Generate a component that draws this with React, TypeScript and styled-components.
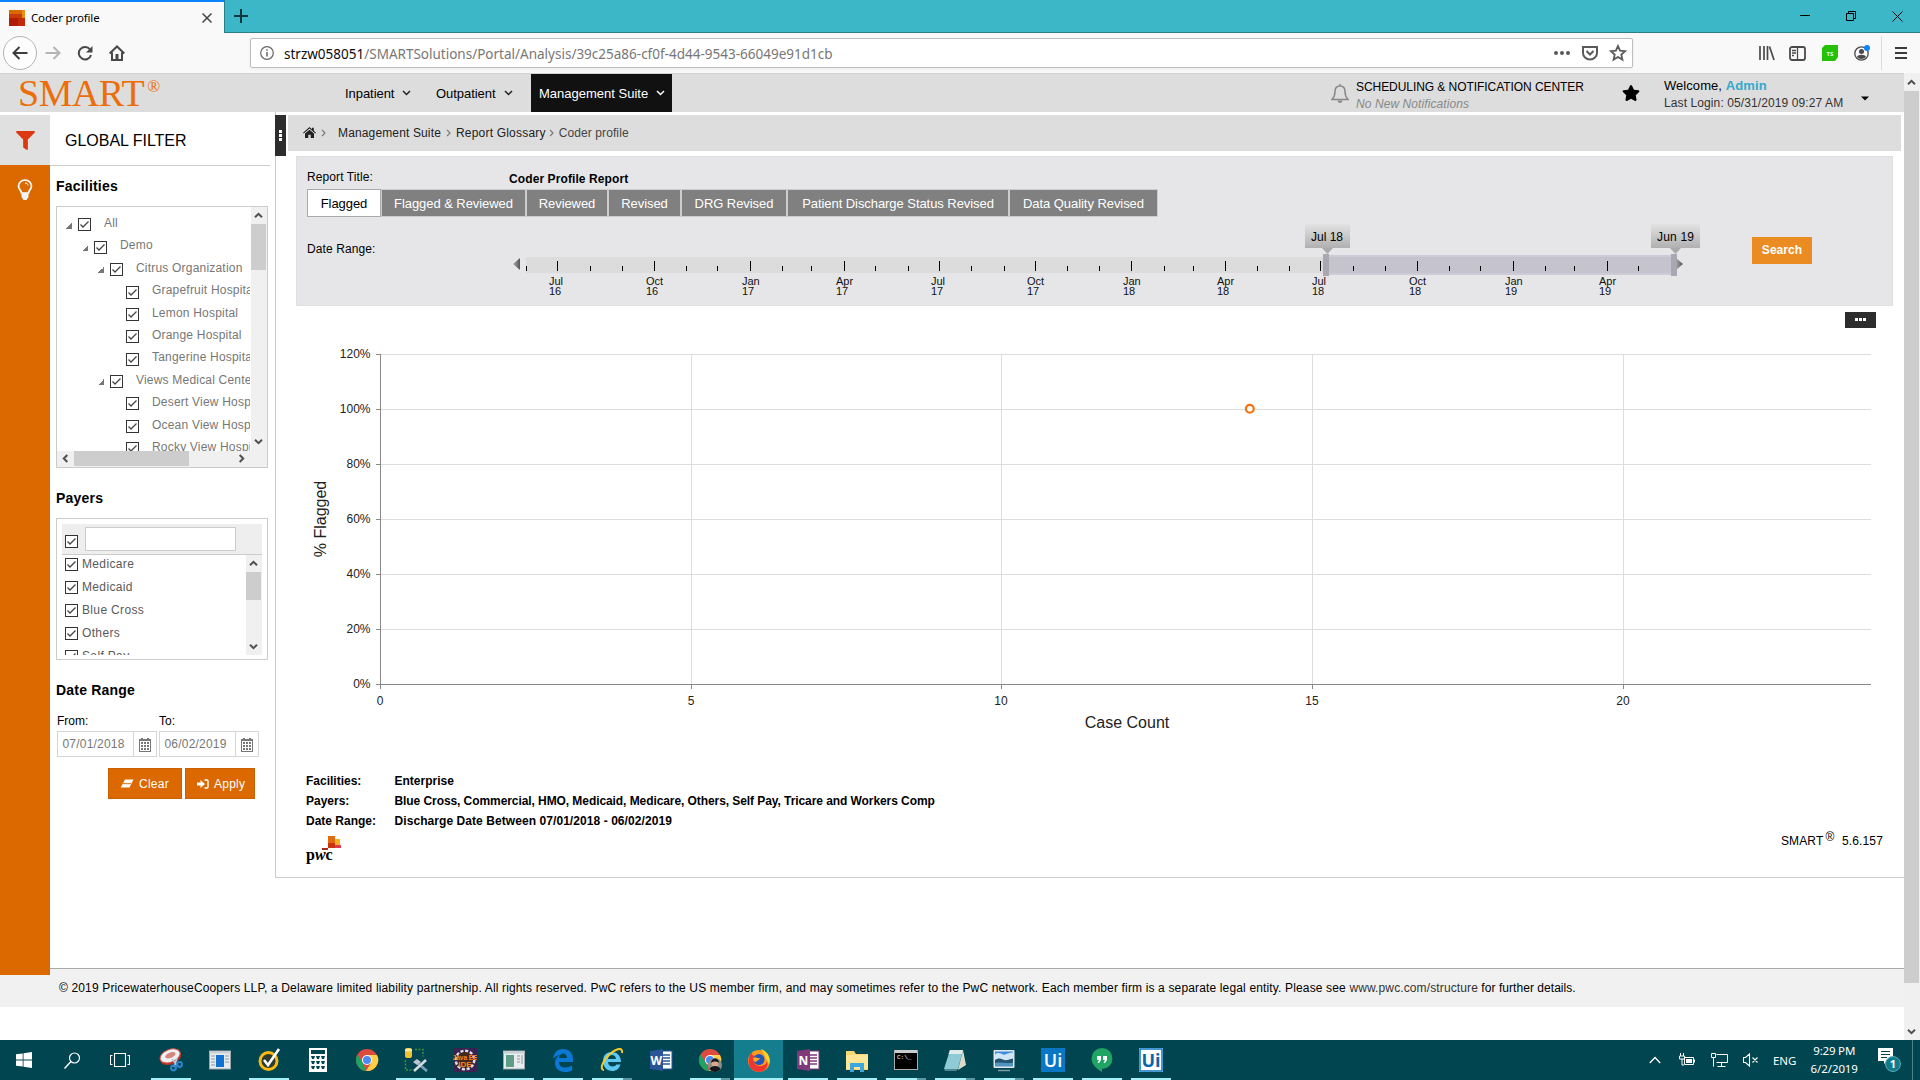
import React from 'react';
import styled, { createGlobalStyle } from 'styled-components';
import { FaFilter, FaStar } from 'react-icons/fa';

const Global = createGlobalStyle`
  html, body { margin: 0; padding: 0; background: #fff; overflow: hidden; }
  * { box-sizing: border-box; }
  body { font-family: "Liberation Sans", Arial, sans-serif; font-size: 12px; color: #000; }
  svg { display: block; flex: none; }
`;

const chromeFont = '"Noto Sans", "Segoe UI", sans-serif';

const T = styled.span<{ $s?: number; $c?: string; $b?: boolean; $ls?: number; $i?: boolean }>`
  font-size: ${p => p.$s ?? 12}px;
  color: ${p => p.$c ?? 'inherit'};
  font-weight: ${p => (p.$b ? 700 : 400)};
  font-style: ${p => (p.$i ? 'italic' : 'normal')};
  letter-spacing: ${p => p.$ls ?? 0}px;
  white-space: pre;
`;
const Gap = styled.span<{ $w: number }>`width: ${p => p.$w}px; flex: none;`;
const Spring = styled.span`flex: 1;`;

const Screen = styled.div`
  width: 1920px; height: 1080px; display: flex; flex-direction: column; overflow: hidden;
`;

/* ---------- browser chrome ---------- */
const TabStrip = styled.div`
  height: 33px; flex: none; display: flex; background: #3cb7c8;
`;
const BrowserTab = styled.div`
  width: 224px; height: 33px; display: flex; align-items: center; padding-left: 9px;
  background: #f9f9fa; border-top: 2px solid #0a84ff; font-family: ${chromeFont};
`;
const StripRest = styled.div`
  flex: 1; display: flex; align-items: center; border-left: 1px solid #2b7f8b; border-bottom: 1px solid #2b7f8b;
  padding-left: 9px;
`;
const Toolbar = styled.div`
  height: 40px; flex: none; display: flex; align-items: center; background: #f9f9fa; padding-left: 3px;
`;
const BackButton = styled.div`
  width: 34px; height: 34px; border-radius: 50%; border: 1px solid #b4b4b5; background: #fdfdfd;
  display: flex; align-items: center; justify-content: center;
`;
const UrlBox = styled.div`
  width: 1383px; height: 30px; border: 1px solid #bebebe; border-radius: 2px; background: #fff;
  display: flex; align-items: center; padding: 0 2px 0 9px; box-shadow: 0 1px 3px rgba(0,0,0,.06);
  font-family: ${chromeFont};
`;
const UrlText = styled.span`padding-top: 2px; font-size: 13.5px; color: #777; white-space: pre;`;
const UrlHost = styled.span`color: #0c0c0d;`;
const ToolDivider = styled.div`width: 1px; height: 34px; background: #dcdcdc; margin: 0 12px 0 11px;`;

/* ---------- page ---------- */
const PageRow = styled.div`height: 967px; flex: none; display: flex;`;
const Page = styled.div`width: 1904px; display: flex; flex-direction: column; background: #fff;`;
const Header = styled.header`
  height: 39px; flex: none; background: #ddd; display: flex; align-items: center; border-top: 1px solid #d2d2d2;
`;
const Logo = styled.div`
  width: 336px; padding-left: 18px; display: flex; align-items: flex-start; color: #eb6e08; height: 38px;
  font-family: "Liberation Serif", "Times New Roman", serif;
`;
const LogoWord = styled.span`font-size: 38px; line-height: 39px; letter-spacing: -.5px;`;
const LogoMark = styled.span`font-size: 17px; line-height: 25px; margin-left: 3px;`;
const NavItem = styled.div<{ $active?: boolean; $w: number }>`
  width: ${p => p.$w}px; height: 38px; display: flex; align-items: center; padding-left: ${p => (p.$active ? 8 : 9)}px;
  background: ${p => (p.$active ? '#111' : 'transparent')}; color: ${p => (p.$active ? '#fff' : '#000')};
`;
const Stack = styled.div<{ $w: number; $drop: number }>`
  width: ${p => p.$w}px; display: flex; flex-direction: column; line-height: 17px; padding-top: ${p => p.$drop}px;
`;

const Body = styled.div`height: 856px; flex: none; display: flex;`;
const Rail = styled.div`
  position: relative; width: 50px; height: 860px; margin-top: 3px; background: #dc6900; flex: none;
`;
const RailCell = styled.div<{ $on?: boolean }>`
  height: 50px; display: flex; align-items: center; justify-content: center;
  background: ${p => (p.$on ? '#e0e0e0' : 'transparent')};
`;
const Filter = styled.aside`width: 225px; padding: 3px 5px 0 0; display: flex; flex-direction: column;`;
const FilterTitle = styled.div`
  height: 51px; border-bottom: 1px solid #ccc; padding-left: 15px; line-height: 51px; flex: none;
`;
const FilterHeading = styled.div<{ $h: number; $lh: number }>`
  height: ${p => p.$h}px; line-height: ${p => p.$lh}px; padding-left: 6px; font-size: 14px; font-weight: 700;
  letter-spacing: .2px; flex: none;
`;
const TreeBox = styled.div`
  margin-left: 6px; width: 212px; height: 262px; border: 1px solid #ccc; display: flex; flex: none;
`;
const TreeLeft = styled.div`width: 194px; display: flex; flex-direction: column;`;
const TreeRows = styled.div`width: 193px; height: 244px; overflow: hidden; padding-top: 5.4px;`;
const TreeRow = styled.div<{ $d: number }>`
  height: 22.4px; display: flex; align-items: center; padding-left: ${p => 9 + p.$d * 16}px; color: #777; white-space: nowrap;
`;
const TreeMark = styled.span<{ $open?: boolean }>`
  width: 6px; height: 6px; margin: 4px 6px 0 0; flex: none;
  background: ${p => (p.$open ? 'linear-gradient(135deg, transparent 50%, #777 50%)' : 'none')};
`;
const TreeText = styled.span`margin: -1px 0 0 13px; letter-spacing: .2px;`;
const CheckFrame = styled.span<{ $mt?: number }>`
  width: 13px; height: 13px; border: 1px solid #333; background: #fff; flex: none; margin-top: ${p => p.$mt ?? 0}px;
`;
const VBar = styled.div<{ $w: number; $pad: number }>`
  width: ${p => p.$w}px; background: #f0f0f0; display: flex; flex-direction: column; align-items: flex-start;
  justify-content: space-between; padding-bottom: ${p => p.$pad}px;
`;
const VTop = styled.div`width: 100%; display: flex; flex-direction: column; align-items: flex-start;`;
const VThumb = styled.div<{ $h: number }>`width: 15px; height: ${p => p.$h}px; background: #cdcdcd;`;
const ArrowCell = styled.div<{ $w?: number; $h?: number }>`
  width: ${p => p.$w ?? 15}px; height: ${p => p.$h ?? 17}px; display: flex; align-items: center; justify-content: center;
`;
const HBar = styled.div`height: 16px; background: #f0f0f0; display: flex; align-items: flex-start;`;
const HThumb = styled.div`width: 115px; height: 15px; background: #cdcdcd; margin-right: 44px;`;

const PayerBox = styled.div`
  margin-left: 6px; width: 212px; height: 142px; border: 1px solid #ccc; padding: 5px 5px 0; flex: none;
`;
const PayerHead = styled.div`
  height: 31px; background: #eee; border-bottom: 1px solid #ccc; display: flex; align-items: flex-start; padding: 3px 0 0 3px;
`;
const SearchInput = styled.div`width: 151px; height: 24px; border: 1px solid #ccc; background: #fff; margin-left: 7px;`;
const PayerBody = styled.div`height: 100px; display: flex;`;
const PayerRows = styled.div`width: 184px; overflow: hidden; padding-top: 3px;`;
const PayerRow = styled.div`height: 23px; display: flex; align-items: flex-start; padding-left: 3px; color: #5a5a5a; line-height: 13px;`;

const DateLabels = styled.div`height: 20px; line-height: 20px; display: flex; padding-left: 7px;`;
const DateLabel = styled.span`width: 102px;`;
const DateRow = styled.div`display: flex; gap: 2px; padding-left: 7px;`;
const DateBox = styled.div`
  width: 100px; height: 26px; border: 1px solid #d6d6d6; display: flex; color: #777; line-height: 24px;
`;
const DateText = styled.span`width: 76px; padding-left: 4.5px; letter-spacing: .2px; border-right: 1px solid #d6d6d6;`;
const DateIcon = styled.span`flex: 1; display: flex; align-items: center; justify-content: center;`;
const FilterActions = styled.div`display: flex; gap: 3px; margin: 11px 0 0 58px;`;
const FilterButton = styled.div<{ $w: number }>`
  width: ${p => p.$w}px; height: 31px; background: #dc6900; border: 1px solid #c96100; color: #fff;
  display: flex; align-items: center; padding-left: 11px; gap: 5px; letter-spacing: .25px; font-size: 12px;
`;

const Content = styled.main`
  width: 1629px; height: 766px; border-left: 1px solid #ccc; border-bottom: 1px solid #ccc;
  display: flex; flex-direction: column;
`;
const CrumbRow = styled.div`display: flex; margin: 3px 0 0 -1px; height: 41px; flex: none;`;
const Handle = styled.div`
  width: 11px; height: 41px; background: #2d2d2d; display: flex; flex-direction: column; align-items: center;
  justify-content: center; gap: 1px;
`;
const Dot = styled.span`width: 3px; height: 3px; background: #fff;`;
const Crumbs = styled.nav`
  margin-left: 2px; width: 1613px; height: 36px; background: #ddd; display: flex; align-items: center; padding-left: 15px; color: #222;
`;
const ReportPanel = styled.section`
  margin-left: 20px; width: 1597px; height: 150px; background: #e6e6e8; border: 1px solid #dfdfe1; flex: none;
  padding-left: 10px; display: flex; flex-direction: column;
`;
const TitleRow = styled.div`height: 32px; padding-top: 12px; display: flex; line-height: 16px; letter-spacing: .1px;`;
const TitleLabel = styled.span`width: 202px;`;
const TitleValue = styled.span`padding-top: 2px; font-weight: 700;`;
const TabRow = styled.div`display: flex; height: 28px; flex: none;`;
const ReportTab = styled.div<{ $w: number; $on?: boolean }>`
  width: ${p => p.$w}px; height: 28px; border: 1px solid ${p => (p.$on ? '#aaa' : '#ccc')};
  background: ${p => (p.$on ? '#fff' : '#808080')}; color: ${p => (p.$on ? '#000' : '#fff')};
  font-size: 13px; letter-spacing: -.06px; display: flex; align-items: center; justify-content: center; white-space: nowrap;
`;
const SliderRow = styled.div`display: flex; height: 88px; align-items: flex-start;`;
const SliderLabel = styled.span`width: 200px; margin-top: 24px; line-height: 16px; letter-spacing: .1px;`;
const SearchButton = styled.div`
  width: 60px; height: 27px; margin: 20px 0 0 45px; background: #eb8c22; color: #fff; font-weight: 700; line-height: 26px;
  text-align: center; letter-spacing: .05px;
`;
const MoreRow = styled.div`height: 22px; padding: 6px 28px 0 0; display: flex; justify-content: flex-end; flex: none;`;
const MoreButton = styled.div`
  width: 31px; height: 16px; background: #2d2d2d; display: flex; gap: 1px; align-items: center; justify-content: center; padding-bottom: 1px;
`;
const ChartArea = styled.div`padding-left: 20px;`;
const Summary = styled.dl`
  margin: 0 0 0 30px; display: grid; grid-template-columns: 88.5px 1fr; grid-auto-rows: 20px; line-height: 20px; font-weight: 700;
`;
const Cell = styled.span<{ $ls?: number }>`letter-spacing: ${p => p.$ls ?? 0}px;`;
const BrandRow = styled.div`display: flex; justify-content: space-between; padding: 2px 21px 0 29px;`;
const PwcLogo = styled.div`width: 40px; padding-top: 2px; display: flex; flex-direction: column;`;
const PwcWord = styled.span`
  font: 700 16px/14px "Liberation Serif", serif; letter-spacing: 0; margin: -3px 0 0 1px;
`;
const Version = styled.div`display: flex; align-items: flex-start; letter-spacing: .15px; line-height: 16px; white-space: pre;`;
const Registered = styled.span`line-height: 9px; padding: 0 4px 0 2px;`;
const Footer = styled.footer`
  height: 39px; flex: none; background: #f1f1f1; border-top: 1px solid #aaa; padding-left: 59px; line-height: 38px;
`;
const PageScroll = styled.div`
  width: 16px; background: #f0f0f0; display: flex; flex-direction: column; justify-content: space-between;
`;

/* ---------- taskbar ---------- */
const Taskbar = styled.div`
  height: 40px; flex: none; background: #00454f; display: flex; color: #fff; font-family: ${chromeFont};
`;
const SysSlot = styled.div<{ $w: number; $r?: number }>`
  width: ${p => p.$w}px; padding-right: ${p => p.$r ?? 0}px; display: flex; align-items: center; justify-content: center;
`;
const AppSlot = styled.div<{ $on?: boolean }>`
  width: 49px; height: 40px; display: flex; flex-direction: column; align-items: center; justify-content: space-between;
  padding-top: 8px; background: ${p => (p.$on ? '#157e8e' : 'transparent')};
`;
const Underline = styled.div<{ $k: number; $on?: boolean }>`
  width: ${p => (p.$on ? 49 : 40)}px; height: 2px;
  background: ${p => (p.$k === 0 ? 'transparent' : p.$k === 2 ? 'linear-gradient(90deg,#a5eff8 31px,#5c98a1 31px)' : '#a5eff8')};
`;
const Tray = styled.div`flex: 1; display: flex; align-items: center; padding-left: 474px;`;
const Clock = styled.div`width: 64px; display: flex; flex-direction: column; align-items: center; line-height: 18px;`;

const Check = ({ mt }: { mt?: number }) => (
  <CheckFrame $mt={mt}>
    <svg width="11" height="11" viewBox="0 0 11 11"><path d="M1.5 5.5 4 8 9.5 2.5" fill="none" stroke="#444" strokeWidth="1.3" /></svg>
  </CheckFrame>
);
const Arrow = ({ dir }: { dir: 'u' | 'd' | 'l' | 'r' }) => {
  const rot = { u: 0, r: 90, d: 180, l: 270 }[dir];
  return (
    <svg width="9" height="9" viewBox="0 0 9 9"><path transform={`rotate(${rot} 4.5 4.5)`} d="M1 6.3 4.5 2.8 8 6.3" fill="none" stroke="#505050" strokeWidth="2" /></svg>
  );
};
const Chev = ({ c = '#222' }: { c?: string }) => (
  <svg width="9" height="6" viewBox="0 0 9 6"><path d="M1 1 4.5 4.5 8 1" fill="none" stroke={c} strokeWidth="1.5" /></svg>
);
const CrumbSep = () => (
  <svg width="5" height="8" viewBox="0 0 5 8"><path d="M1 .8 4 4 1 7.2" fill="none" stroke="#777" strokeWidth="1.2" /></svg>
);
const Calendar = () => (
  <svg width="12" height="15" viewBox="0 0 12 15" shapeRendering="crispEdges">
    <path d="M.5 2.500h11v12H.5z" fill="#fff" stroke="#777" /><rect y="2" width="12" height="2" fill="#777" />
    <rect x="2" y="1" width="2" height="2" fill="#777" /><rect x="8" y="1" width="2" height="2" fill="#777" />
    {[5, 8, 11].map(y => [2, 5, 8].map(x => <rect key={`${x}-${y}`} x={x} y={y} width="2" height="2" fill="#777" />))}
  </svg>
);
const House = () => (
  <svg width="13" height="12" viewBox="0 0 13 12">
    <path d="M6.500 0 9 2.200V.8h1.800v3L13 5.800l-.7.800-5.800-5-5.800 5-.7-.8z" fill="#222" />
    <path d="m6.500 2.700 4.500 3.900V11H7.700V7.800H5.300V11H2V6.600z" fill="#222" />
  </svg>
);
const Eraser = () => (
  <svg width="14" height="10" viewBox="0 0 14 10"><path d="M5 .5h8.500L9.500 8.500H.8z" fill="#fff" /><path d="M2.800 4.700h8.300" stroke="#dc6900" strokeWidth="1" /></svg>
);
const SignIn = () => (
  <svg width="12" height="10" viewBox="0 0 12 10"><path d="M0 3.500h3.500V1L8 5 3.500 9V6.500H0z" fill="#fff" /><path d="M7.500 1H10q1 0 1 1v6q0 1-1 1H7.500" fill="none" stroke="#fff" strokeWidth="1.400" /></svg>
);

const tree: [number, string][] = [
  [0, 'All'], [1, 'Demo'], [2, 'Citrus Organization'], [3, 'Grapefruit Hospital'], [3, 'Lemon Hospital'], [3, 'Orange Hospital'],
  [3, 'Tangerine Hospital'], [2, 'Views Medical Center'], [3, 'Desert View Hospital'], [3, 'Ocean View Hospital'], [3, 'Rocky View Hospital'],
];
const payers = ['Medicare', 'Medicaid', 'Blue Cross', 'Others', 'Self Pay'];
const reportTabs: [string, number][] = [
  ['Flagged', 74], ['Flagged & Reviewed', 145], ['Reviewed', 82], ['Revised', 73], ['DRG Revised', 106],
  ['Patient Discharge Status Revised', 222], ['Data Quality Revised', 149],
];
const ticks = [526, 557, 590, 622, 654, 686, 717, 750, 782, 811, 844, 875, 908, 939, 971, 1004, 1035, 1067, 1099, 1131, 1164, 1193,
  1225, 1257, 1289, 1320, 1353, 1385, 1417, 1449, 1480, 1513, 1545, 1574, 1607, 1638];
const months = ['Jul 16', 'Oct 16', 'Jan 17', 'Apr 17', 'Jul 17', 'Oct 17', 'Jan 18', 'Apr 18', 'Jul 18', 'Oct 18', 'Jan 19', 'Apr 19'];

const Slider = () => (
  <svg width="1200" height="88" viewBox="507 217 1200 88" fontFamily="Liberation Sans, Arial, sans-serif">
    <defs>
      <linearGradient id="tip" x1="0" y1="0" x2="0" y2="1"><stop offset="0" stopColor="#e2e2e2" /><stop offset="1" stopColor="#b0b0b0" /></linearGradient>
      <linearGradient id="tri" x1="0" y1="0" x2="1" y2="0"><stop offset="0" stopColor="#aaa" /><stop offset="1" stopColor="#555" /></linearGradient>
    </defs>
    <path d="M520 258v12l-7-6z" fill="url(#tri)" />
    <rect x="526" y="257" width="1148" height="16" fill="#dcdcdc" />
    <rect x="1328" y="255" width="346" height="20" fill="#cccbd6" />
    <rect x="1328" y="257" width="346" height="16" fill="#c4c3ce" />
    {ticks.map((x, i) => {
      const big = i % 3 === 1;
      return <rect key={x} x={x} y={big ? 261 : 266} width="1" height={big ? 10 : 5} fill="#000" />;
    })}
    {months.map((m, i) => {
      const x = ticks[i * 3 + 1] - 8;
      return (
        <g key={m} fontSize="11" fill="#111">
          <text x={x} y="285">{m.slice(0, 3)}</text>
          <text x={x} y="295">{m.slice(4)}</text>
        </g>
      );
    })}
    <rect x="1323" y="254" width="6" height="22" fill="#a9a8ae" />
    <rect x="1671" y="254" width="6" height="22" fill="#a9a8b2" />
    <path d="M1676 258v12l7-6z" fill="url(#tri)" />
    <rect x="1305" y="224" width="45" height="24" fill="url(#tip)" /><path d="M1322 248h11l-5.500 6z" fill="#aaa" />
    <rect x="1651" y="224" width="49" height="24" fill="url(#tip)" /><path d="M1670 248h11l-5.500 6z" fill="#aaa" />
    <text x="1311" y="241" fontSize="12">Jul 18</text>
    <text x="1657" y="241" fontSize="12" letterSpacing=".2">Jun 19</text>
  </svg>
);

const Chart = () => (
  <svg width="1600" height="443" viewBox="296 328 1600 443" fontFamily="Liberation Sans, Arial, sans-serif" fill="#222">
    {[0, 1, 2, 3, 4, 5, 6].map(i => {
      const y = 354.5 + i * 55;
      return (
        <g key={i}>
          {i < 6 && <path d={`M381 ${y}H1871`} stroke="#ddd" />}
          <path d={`M376 ${y}h5`} stroke="#888" />
          <text x="370.5" y={y + 3.5} fontSize="12" textAnchor="end">{120 - i * 20}%</text>
        </g>
      );
    })}
    {[0, 5, 10, 15, 20].map((v, i) => {
      const x = [380.5, 691.5, 1001.5, 1312.5, 1623.5][i];
      return (
        <g key={v}>
          {i > 0 && <path d={`M${x} 354V684`} stroke="#ddd" />}
          <path d={`M${x} 684v5`} stroke="#888" />
          <text x={x - 0.5} y="705" fontSize="12" textAnchor="middle">{v}</text>
        </g>
      );
    })}
    <path d="M380.500 354V684.500H1871" fill="none" stroke="#888" />
    <circle cx="1249.800" cy="408.700" r="3.900" fill="#fff" stroke="#f5720f" strokeWidth="2.200" />
    <text x="1127" y="728" fontSize="16" textAnchor="middle">Case Count</text>
    <text transform="translate(326 519) rotate(-90)" fontSize="16" textAnchor="middle">% Flagged</text>
  </svg>
);

const icon = (children: React.ReactNode) => <svg width="24" height="24" viewBox="0 0 24 24">{children}</svg>;
const Chrome = () => (
  <>
    <circle cx="12" cy="12" r="11" fill="#dd4b3e" />
    <path d="M2.500 6.500 8 15l3 8A11 11 0 0 1 2.500 6.500z" fill="#1da462" />
    <path d="M12 7h10A11 11 0 0 1 11 23l5-8z" fill="#ffce44" />
    <circle cx="12" cy="12" r="5" fill="#fff" /><circle cx="12" cy="12" r="4" fill="#4a8af4" />
  </>
);
const WindowIcon = ({ alt }: { alt?: boolean }) => (
  <>
    <rect x="1.500" y="3" width="21" height="18" fill="#e9ecee" stroke="#9aa5ab" />
    <rect x="1.500" y="3" width="21" height="2.500" fill="#c9d0d4" />
    <rect x={alt ? 4 : 8} y="7" width="8" height="12" fill={alt ? '#5f9d86' : '#0f74d1'} />
    <path d={alt ? 'M15 8h3M15 11h3M15 14h3M20 7v9' : 'M3 8h4M3 11h4M3 14h4M3 17h4M17 8h4M17 11h4M17 14h4'} stroke="#8a979e" />
  </>
);
const Ui = ({ inv }: { inv?: boolean }) => (
  <>
    <rect width="24" height="24" fill={inv ? '#fff' : '#0a77c6'} />
    {inv && <path d="M1 1h22v22H1z" fill="none" stroke="#0a77c6" strokeWidth="1.500" />}
    <text x="12" y="19" fontSize="18" fontWeight={inv ? 700 : 600} textAnchor="middle" fontFamily="Open Sans" fill={inv ? '#0a67a6' : '#fff'}>Ui</text>
  </>
);
const Office = ({ l, c }: { l: string; c: string }) => (
  <>
    <rect x="11" y="3" width="12" height="18" fill="#fff" stroke={c} />
    <path d="M14 7h7M14 10h7M14 13h7M14 16h7" stroke={c} strokeWidth="1.300" />
    <path d="M1 3 14 1v22L1 21z" fill={c} />
    <text x="7.300" y="16.500" fontSize="12" fontWeight="700" textAnchor="middle" fontFamily="Open Sans" fill="#fff">{l}</text>
  </>
);
const apps: [number, React.ReactNode][] = [
  [1, <><g transform="rotate(-22 11 9)"><ellipse cx="11.500" cy="9.500" rx="11" ry="7" fill="#b9302a" /><ellipse cx="11.500" cy="8" rx="10.500" ry="6.300" fill="#eef2f3" stroke="#cf5048" /><ellipse cx="12" cy="7.500" rx="5.500" ry="2.600" fill="#d7867f" /></g><path d="m13 11 6 7M18 10l-3 9" stroke="#b5ccd8" strokeWidth="1.800" /><g fill="none" stroke="#2b86cf" strokeWidth="2"><circle cx="14.500" cy="20" r="2.400" /><circle cx="20.500" cy="16.500" r="2.400" /></g></>],
  [0, <WindowIcon />],
  [1, <><circle cx="11.500" cy="13" r="8.500" fill="#2d3a2e" stroke="#f9b915" strokeWidth="3" /><path d="m7 12 4 5L22 1" fill="none" stroke="#fff" strokeWidth="2.600" /></>],
  [0, <><rect x="3" width="18" height="24" fill="#fff" /><rect x="5" y="2" width="14" height="4" fill="#00454f" /><g fill="#00454f">{[9, 14, 19].map(y => [5, 10, 15].map(x => <path key={`${x}${y}`} d={`M${x} ${y - 1}h4l-1 3h-2z`} />))}</g></>],
  [0, <Chrome />],
  [1, <><rect x="1" y="0" width="7" height="10" rx="2" fill="#f2c230" /><ellipse cx="4.500" cy="2" rx="3.500" ry="1.500" fill="#fbe9a0" /><path d="M11 1.500h8v7M1.500 12v10h7" fill="none" stroke="#3b9140" strokeDasharray="2 1.500" strokeWidth="1.500" /><path d="m11 13 12 10" stroke="#7d9cb8" strokeWidth="2.800" /><path d="M22 12 10 23" stroke="#d3dbe0" strokeWidth="2.600" /><path d="m9 14 4-3 4 3-4 3z" fill="#b9c6cf" /></>],
  [1, <><rect width="24" height="24" fill="#3a2350" /><circle cx="12" cy="12" r="9" fill="none" stroke="#ddd" strokeWidth="3" strokeDasharray="3 1.700" /><circle cx="12" cy="12" r="8" fill="#44281c" /><text x="12" y="11.500" fontSize="6.500" fontWeight="700" textAnchor="middle" fill="#f6861f" fontFamily="Liberation Sans">Java EE</text><text x="12" y="19" fontSize="8" fontWeight="700" textAnchor="middle" fill="#f6861f" fontFamily="Liberation Sans">IDE</text></>],
  [1, <WindowIcon alt />],
  [1, <path d="M2 11C3 4 7 1 12 1c6 0 10 4 10 10v3H8c0 4 3 5.500 6 5.500 2.500 0 5-.7 7-2v5C19 23.500 16.500 24 14 24 8 24 4 20.500 4 15c0-4 2-6.500 5-8-3 .4-5.500 2-7 4zm6-1h8c0-3-1.500-4.500-3.800-4.500S8.500 7 8 10z" fill="#0a78d4" fillRule="evenodd" />],
  [2, <><path d="M3 13C3 7 7 4 12 4s9 4 9 10H8c.3 3 2 4.500 4.500 4.500 2 0 3.300-.8 4-2h4C19 21 16 23 12.500 23 7 23 3 19 3 13zm5-2h8c-.3-2.500-1.700-4-4-4s-3.700 1.500-4 4z" fill="#5cc9f5" fillRule="evenodd" /><path d="M4 22C-1 22 3 12 10 6S23-1 22 5" fill="none" stroke="#f5c927" strokeWidth="2" /></>],
  [0, <Office l="W" c="#2a5699" />],
  [2, <><Chrome /><circle cx="17" cy="17" r="7" fill="#8c8d86" /><circle cx="17" cy="15.500" r="3.600" fill="#d9a98a" /><path d="M13 15c0-6 8-6 8 0-2-2-6-2-8 0z" fill="#181818" /><path d="M11.500 21c2-4 9-4 11 0-3 4-8 4-11 0z" fill="#15171c" /></>],
  [1, <><circle cx="12" cy="13" r="11" fill="#ff9a1f" /><path d="M12 24C4 24 0 17 2 10c.500-3 2-4 3-5 0 2 1 3 3 3-3 4-1 10 5 10 4 0 7-2 7-6 2 7-2 12-8 12z" fill="#f0362f" /><path d="M14 1c6 2 10 8 8 15-2-2-2-5-4-7 0-3-3-5-4-8z" fill="#ffd42a" /><circle cx="12" cy="11.500" r="5.500" fill="#2358b8" /><path d="M6 10c3-2 4 1 7 0-1 3-3 2-4 4-2 0-3-2-3-4z" fill="#ffa91f" /></>],
  [1, <Office l="N" c="#80397b" />],
  [1, <><path d="M1 3h8l2 3h12v16H1z" fill="#f7d774" /><rect x="1" y="7" width="22" height="14" fill="#ffe694" /><path d="M5 24v-9h14v9h-4v-5H9v5z" fill="#3fa7df" /></>],
  [2, <><rect x=".500" y="2.500" width="23" height="19" fill="#000" stroke="#aaa" /><rect x="1" y="2" width="22" height="3" fill="#ccc" /><text x="3" y="11" fontSize="6" fill="#fff" fontFamily="Liberation Mono">C:\_</text></>],
  [2, <><path d="M7 2h13l-5 19H1z" fill="#8fcbd6" /><path d="M7 2h13l-1 4H5.500z" fill="#dfeaec" /><path d="m20 2 3 15-8 5z" fill="#dcd9c8" /><path d="M1 21h14l-2 2H2z" fill="#4d8790" /></>],
  [2, <><rect x="1.500" y="2" width="21" height="18" rx="1" fill="#dfe7ec" /><rect x="3" y="3.500" width="18" height="7" fill="#3f8ddb" /><path d="M3 6.500c3-3 6-1 8 0s6-2 10-2V12H3z" fill="#cfe6f8" /><path d="M3 12c3-2 5-2 8-.5s6 0 10-1V18H3z" fill="#24536b" /><path d="M3 15c5-1.500 12 1 18-.5V18.500H3z" fill="#4d95c0" /><path d="M6 22.500h12" stroke="#7f9aa5" strokeWidth="1.500" /></>],
  [1, <Ui />],
  [1, <><path d="M12 0a10.500 10.500 0 0 1 0 21v3C7 21 1.500 17 1.500 10.500A10.500 10.500 0 0 1 12 0z" fill="#1fa463" /><path d="M7 8h4v4l-2 3H7.500L9 12H7zM13 8h4v4l-2 3h-1.500l1.500-3h-2z" fill="#fff" /></>],
  [1, <Ui inv />],
];

export default function App() {
  return (
    <Screen>
      <Global />
      <TabStrip>
        <BrowserTab>
          <svg width="16" height="16" viewBox="0 0 16 16"><rect width="16" height="16" fill="#d44a05" /><rect width="13" height="4" fill="#dc6900" /><rect y="4" width="13" height="5" fill="#c63d08" /><rect x="0" y="8" width="9" height="8" fill="#b01c05" /><rect x="9" y="8" width="7" height="8" fill="#c32a06" /><rect x="13" y="0" width="3" height="8" fill="#ea8b16" /></svg>
          <Gap $w={6} />
          <T $s={11.5} $ls={-0.15}>Coder profile</T>
          <Gap $w={102} />
          <svg width="10" height="10" viewBox="0 0 10 10"><path d="m.5.5 9 9m0-9-9 9" stroke="#444" strokeWidth="1.500" /></svg>
        </BrowserTab>
        <StripRest>
          <svg width="14" height="14" viewBox="0 0 14 14"><path d="M7 0v14M0 7h14" stroke="#12363b" strokeWidth="2" /></svg>
          <Gap $w={1552} />
          <svg width="10" height="10"><path d="M0 4.500h10" stroke="#000" /></svg>
          <Gap $w={36} />
          <svg width="10" height="10" viewBox="0 0 10 10"><path d="M.5 2.500h7v7h-7zM2.500 2V.5h7v7H8" fill="none" stroke="#000" /></svg>
          <Gap $w={36} />
          <svg width="11" height="11" viewBox="0 0 11 11"><path d="m.5.5 10 10m0-10-10 10" stroke="#000" /></svg>
        </StripRest>
      </TabStrip>
      <Toolbar>
        <BackButton><svg width="16" height="14" viewBox="0 0 16 14"><path d="M15.500 7H2M7.500 1 1.500 7l6 6" fill="none" stroke="#3c3c3d" strokeWidth="2" /></svg></BackButton>
        <Gap $w={8} />
        <svg width="16" height="14" viewBox="0 0 16 14"><path d="M.5 7H14M8.500 1l6 6-6 6" fill="none" stroke="#b5b5b6" strokeWidth="2" /></svg>
        <Gap $w={16} />
        <svg width="16" height="16" viewBox="0 0 16 16"><path d="M13 4.500A6.200 6.200 0 1 0 14 10" fill="none" stroke="#48484a" strokeWidth="2" /><path d="M15.500 1v6.500H9z" fill="#48484a" /></svg>
        <Gap $w={16} />
        <svg width="16" height="16" viewBox="0 0 16 16"><path d="M.7 8.500 8 1.500l7.300 7M3 7.500V15h10V7.500" fill="none" stroke="#48484a" strokeWidth="2" /><rect x="6.500" y="9" width="3" height="6" fill="#48484a" /></svg>
        <Gap $w={125} />
        <UrlBox>
          <svg width="14" height="14" viewBox="0 0 14 14"><circle cx="7" cy="7" r="6.300" fill="none" stroke="#666" strokeWidth="1.200" /><path d="M7 6v4.500M7 3.300v1.500" stroke="#666" strokeWidth="1.500" /></svg>
          <Gap $w={10} />
          <UrlText><UrlHost>strzw058051</UrlHost>/SMARTSolutions/Portal/Analysis/39c25a86-cf0f-4d44-9543-66049e91d1cb</UrlText>
          <Spring />
          <svg width="76" height="20" viewBox="1554 43 76 20">
            <g fill="#5a5a5b"><circle cx="1556" cy="53" r="2" /><circle cx="1562" cy="53" r="2" /><circle cx="1568" cy="53" r="2" /></g>
            <path d="M1583 47h14v6a7 6.500 0 0 1-14 0z" fill="none" stroke="#5a5a5b" strokeWidth="2" /><path d="m1586.500 51 3.500 3.500 3.500-3.500" fill="none" stroke="#5a5a5b" strokeWidth="2" />
            <path d="m1618 46 2.100 4.700 5 .500-3.800 3.400 1.100 5-4.400-2.600-4.400 2.600 1.100-5-3.800-3.400 5-.5z" fill="none" stroke="#5a5a5b" strokeWidth="1.800" />
          </svg>
        </UrlBox>
        <Gap $w={126} />
        <svg width="16" height="16" viewBox="0 0 16 16"><path d="M1 1v14M5 1v14M8.500 1v14M10.500 1.500 15 15" stroke="#4a4a4b" strokeWidth="1.700" /></svg>
        <Gap $w={14} />
        <svg width="17" height="15" viewBox="0 0 17 15"><rect x="1" y="1" width="15" height="13" rx="2" fill="none" stroke="#4a4a4b" strokeWidth="1.800" /><path d="M8.500 1v13M3 4.500h4M3 7h4M3 9.500h2" stroke="#4a4a4b" strokeWidth="1.300" /></svg>
        <Gap $w={16} />
        <svg width="16" height="16" viewBox="0 0 16 16"><path d="M3 0h13v12l-3 4H0V3z" fill="#26c106" /><text x="8" y="10.500" fontSize="6" fontWeight="700" textAnchor="middle" fill="#e9ffe5" fontFamily="Open Sans">TS</text></svg>
        <Gap $w={16} />
        <svg width="16" height="16" viewBox="0 0 16 16"><circle cx="7.500" cy="8.500" r="6.700" fill="none" stroke="#4a4a4b" strokeWidth="1.300" /><circle cx="7.500" cy="6.500" r="2.500" fill="#4a4a4b" /><path d="M3 12c1-3 8-3 9 0-2.500 2.500-6.500 2.500-9 0z" fill="#4a4a4b" /><circle cx="13" cy="3" r="3" fill="#0a84ff" /></svg>
        <ToolDivider />
        <svg width="14" height="14" viewBox="0 0 14 14"><path d="M1 2h12M1 7h12M1 12h12" stroke="#3c3c3d" strokeWidth="2" /></svg>
      </Toolbar>

      <PageRow>
        <Page>
          <Header>
            <Logo><LogoWord>SMART</LogoWord><LogoMark>®</LogoMark></Logo>
            <NavItem $w={91}><T $s={13} $ls={-0.05}>Inpatient</T><Gap $w={8} /><Chev /></NavItem>
            <NavItem $w={104}><T $s={13} $ls={-0.05}>Outpatient</T><Gap $w={8} /><Chev /></NavItem>
            <NavItem $w={141} $active><T $s={13}>Management Suite</T><Gap $w={8} /><Chev c="#fff" /></NavItem>
            <Gap $w={658.500} />
            <svg width="18" height="22" viewBox="0 -2 18 22"><path d="M9 2c-3.500 0-5 2.500-5 5.500 0 4-1 6-3 8h16c-2-2-3-4-3-8C14 4.500 12.500 2 9 2zM9 0v2" fill="none" stroke="#888" strokeWidth="1.500" /><path d="M6.500 16.500a2.500 2.500 0 0 0 5 0z" fill="#888" /></svg>
            <Gap $w={7.500} />
            <Stack $w={266} $drop={5}>
              <T $ls={-0.06}>SCHEDULING &amp; NOTIFICATION CENTER</T>
              <T $i $c="#888" $ls={0.08}>No New Notifications</T>
            </Stack>
            <FaStar size={18} color="#000" />
            <Gap $w={24} />
            <Stack $w={197} $drop={2}>
              <span><T $s={13} $ls={0.05}>Welcome, </T><T $s={13} $b $c="#33a9cc" $ls={0.15}>Admin</T></span>
              <T $c="#333" $ls={0.1}>Last Login: 05/31/2019 09:27 AM</T>
            </Stack>
            <svg width="8" height="16" viewBox="0 0 8 16"><path d="M0 11.500h8L4 15.500z" fill="#000" /></svg>
          </Header>

          <Body>
            <Rail>
              <RailCell $on><FaFilter size={19} color="#dc3912" /></RailCell>
              <RailCell><svg width="16" height="22" viewBox="0 0 16 22"><path d="M4.500 14C4.500 11.500 1.500 10.500 1.500 7a6.500 6 0 0 1 13 0c0 3.500-3 4.500-3 7z" fill="none" stroke="#fff" strokeWidth="1.700" /><path d="M8 4c2 0 3 1 3 2.500" fill="none" stroke="#fff" /><path d="M4.500 14h7v4l-2 3h-3l-2-3z" fill="#eef4fa" /></svg></RailCell>
            </Rail>
            <Filter>
              <FilterTitle><T $s={16} $ls={-0.02}>GLOBAL FILTER</T></FilterTitle>
              <FilterHeading $h={40} $lh={40}>Facilities</FilterHeading>
              <TreeBox>
                <TreeLeft>
                  <TreeRows>
                    {tree.map(([d, name]) => (
                      <TreeRow key={name} $d={d}><TreeMark $open={d < 3} /><Check mt={2.5} /><TreeText>{name}</TreeText></TreeRow>
                    ))}
                  </TreeRows>
                  <HBar><ArrowCell $w={17} $h={15}><Arrow dir="l" /></ArrowCell><HThumb /><ArrowCell $w={17} $h={15}><Arrow dir="r" /></ArrowCell></HBar>
                </TreeLeft>
                <VBar $w={16} $pad={17}>
                  <VTop><ArrowCell><Arrow dir="u" /></ArrowCell><VThumb $h={46} /></VTop>
                  <ArrowCell><Arrow dir="d" /></ArrowCell>
                </VBar>
              </TreeBox>
              <FilterHeading $h={50} $lh={60}>Payers</FilterHeading>
              <PayerBox>
                <PayerHead><Check mt={8} /><SearchInput /></PayerHead>
                <PayerBody>
                  <PayerRows>{payers.map(p => <PayerRow key={p}><Check /><Gap $w={4} /><T $ls={0.35}>{p}</T></PayerRow>)}</PayerRows>
                  <VBar $w={16} $pad={0}>
                    <VTop><ArrowCell><Arrow dir="u" /></ArrowCell><VThumb $h={28} /></VTop>
                    <ArrowCell><Arrow dir="d" /></ArrowCell>
                  </VBar>
                </PayerBody>
              </PayerBox>
              <FilterHeading $h={51} $lh={60}>Date Range</FilterHeading>
              <DateLabels><DateLabel>From:</DateLabel><DateLabel>To:</DateLabel></DateLabels>
              <DateRow>
                <DateBox><DateText>07/01/2018</DateText><DateIcon><Calendar /></DateIcon></DateBox>
                <DateBox><DateText>06/02/2019</DateText><DateIcon><Calendar /></DateIcon></DateBox>
              </DateRow>
              <FilterActions>
                <FilterButton $w={74}><Eraser />Clear</FilterButton>
                <FilterButton $w={70}><SignIn />Apply</FilterButton>
              </FilterActions>
            </Filter>

            <Content>
              <CrumbRow>
                <Handle><Dot /><Dot /><Dot /></Handle>
                <Crumbs>
                  <House /><Gap $w={5} /><CrumbSep /><Gap $w={12} />
                  <T $ls={0.14}>Management Suite</T><Gap $w={5} /><CrumbSep /><Gap $w={5} />
                  <T $ls={0.2}>Report Glossary</T><Gap $w={3} /><CrumbSep /><Gap $w={5} />
                  <T $c="#444" $ls={0.1}>Coder profile</T>
                </Crumbs>
              </CrumbRow>
              <ReportPanel>
                <TitleRow>
                  <TitleLabel>Report Title:</TitleLabel>
                  <TitleValue>Coder Profile Report</TitleValue>
                </TitleRow>
                <TabRow>{reportTabs.map(([t, w], i) => <ReportTab key={t} $w={w} $on={i === 0}>{t}</ReportTab>)}</TabRow>
                <SliderRow>
                  <SliderLabel>Date Range:</SliderLabel>
                  <Slider />
                  <SearchButton>Search</SearchButton>
                </SliderRow>
              </ReportPanel>
              <MoreRow><MoreButton><Dot /><Dot /><Dot /></MoreButton></MoreRow>
              <ChartArea><Chart /></ChartArea>
              <Summary>
                <Cell>Facilities:</Cell><Cell>Enterprise</Cell>
                <Cell>Payers:</Cell><Cell $ls={-0.075}>Blue Cross, Commercial, HMO, Medicaid, Medicare, Others, Self Pay, Tricare and Workers Comp</Cell>
                <Cell>Date Range:</Cell><Cell $ls={0.07}>Discharge Date Between 07/01/2018 - 06/02/2019</Cell>
              </Summary>
              <BrandRow>
                <PwcLogo>
                  <svg width="40" height="16" viewBox="0 0 40 16"><rect x="23" y="1" width="7" height="12" fill="#e06b10" /><rect x="23" y="8" width="9" height="5" fill="#c7340f" /><rect x="30" y="4" width="5" height="7" fill="#f4b223" /><rect x="30" y="10" width="6" height="3" fill="#df3d4f" /><rect x="17" y="13" width="6" height="2" fill="#ab2a1a" /></svg>
                  <PwcWord>p<em>w</em>c</PwcWord>
                </PwcLogo>
                <Version>SMART<Registered>®</Registered> 5.6.157</Version>
              </BrandRow>
            </Content>
          </Body>
          <Footer>
            <T $ls={0.15}>© 2019 PricewaterhouseCoopers LLP, a Delaware limited liability partnership. All rights reserved. PwC refers to the US member firm, and may sometimes refer to the PwC network. Each member firm is a separate legal entity. Please see </T>
            <T $c="#333" $ls={0.12}>www.pwc.com/structure</T><T $ls={0.05}> for further details.</T>
          </Footer>
        </Page>
        <PageScroll>
          <VTop><ArrowCell $h={18}><Arrow dir="u" /></ArrowCell><VThumb $h={892} /></VTop>
          <ArrowCell><Arrow dir="d" /></ArrowCell>
        </PageScroll>
      </PageRow>

      <Taskbar>
        <SysSlot $w={48}><svg width="16" height="16" viewBox="0 0 16 16"><path d="M0 2.300 6.700 1.400v6.200H0zM7.500 1.300 16 0v7.600H7.500zM0 8.400h6.700v6.200L0 13.700zM7.500 8.400H16V16l-8.500-1.300z" fill="#fff" /></svg></SysSlot>
        <SysSlot $w={48}><svg width="17" height="17" viewBox="0 0 17 17"><circle cx="10.500" cy="6" r="5" fill="none" stroke="#fff" strokeWidth="1.200" /><path d="m7 9.500-6.500 7" stroke="#fff" strokeWidth="1.400" /></svg></SysSlot>
        <SysSlot $w={50} $r={2}><svg width="20" height="14" viewBox="0 0 20 14"><path d="M4.500.5h11v13h-11zM2.500 2.500h-2v9h2M17.500 2.500h2v9h-2" fill="none" stroke="#fff" strokeWidth="1.100" /></svg></SysSlot>
        {apps.map(([k, g], i) => <AppSlot key={i} $on={i === 12}>{icon(g)}<Underline $k={k} $on={i === 12} /></AppSlot>)}
        <Tray>
          <svg width="12" height="8" viewBox="0 0 12 8"><path d="m.8 7 5.200-5.500L11.200 7" fill="none" stroke="#fff" strokeWidth="1.300" /></svg>
          <Gap $w={18} />
          <svg width="17" height="14" viewBox="0 0 17 14"><path d="M5.500 4.500h9v7h-9zM15.500 6.500v3M.5 3h5v3h-5zM1.500 0v3M4.500 0v3M3 6v6h2" fill="none" stroke="#fff" /><rect x="7" y="6" width="6" height="4" fill="#fff" /></svg>
          <Gap $w={15} />
          <svg width="17" height="14" viewBox="0 0 17 14"><path d="M5.500 1.500h11v8h-11M10.500 9.500v4M6.500 13.500h8M.5.5h4v4h-4zM2.500 4.500v9" fill="none" stroke="#fff" /></svg>
          <Gap $w={15} />
          <svg width="16" height="14" viewBox="0 0 16 14"><path d="M.5 4.500h2l4-3.500v12l-4-3.500h-2zM9.500 4.500l5 5m0-5-5 5" fill="none" stroke="#fff" strokeWidth="1.100" /></svg>
          <Gap $w={14} />
          <T $s={11.5} $ls={-0.1}>ENG</T>
          <Gap $w={6} />
          <Clock><T $s={11.5} $ls={-0.2}>9:29 PM</T><T $s={11.5} $ls={-0.1}>6/2/2019</T></Clock>
          <Gap $w={11} />
          <svg width="26" height="28" viewBox="0 0 26 28"><path d="M1 2h15v13h-6l-3 3v-3H1z" fill="#fff" /><path d="M4 5.500h9M4 8.500h9M4 11.500h6" stroke="#00454f" strokeWidth="1.200" /><circle cx="16" cy="18" r="7.500" fill="#0e7c8c" stroke="#5ba9b3" /><text x="16" y="22" fontSize="11" fontWeight="700" fill="#fff" textAnchor="middle" fontFamily="Open Sans">1</text></svg>
          <Gap $w={9} />
          <svg width="1" height="40"><rect width="1" height="40" fill="#4d8189" /></svg>
        </Tray>
      </Taskbar>
    </Screen>
  );
}
